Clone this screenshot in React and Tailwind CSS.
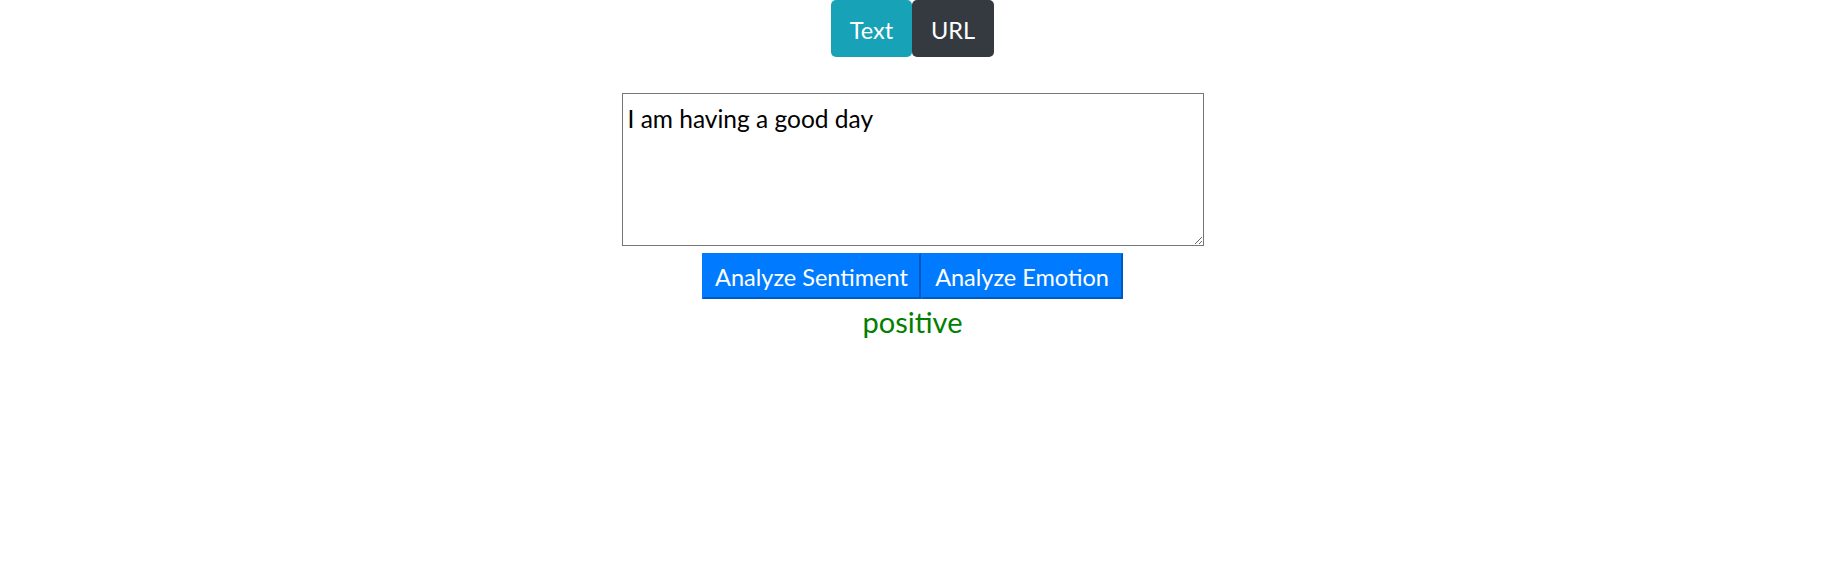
import { useState } from 'react'

const App = () => {
  const [mode, setMode] = useState('text')
  const [input, setInput] = useState('I am having a good day')

  return (
    <div className="min-h-[565px] w-full bg-white font-['Lato','Liberation_Sans',sans-serif]">
      <div className="w-[1825px] flex flex-col items-center">
        {/* Mode toggle */}
        <div className="flex">
          <button
            onClick={() => setMode('text')}
            className="h-[57px] w-[81px] rounded-[5px] bg-[#17a2b8] pt-[4px] text-[23.5px] text-white"
          >
            Text
          </button>
          <button
            onClick={() => setMode('url')}
            className="h-[57px] w-[82px] rounded-[5px] bg-[#343a40] pt-[4px] text-[23.5px] text-white"
          >
            URL
          </button>
        </div>

        {/* Input */}
        <textarea
          value={input}
          onChange={(e) => setInput(e.target.value)}
          className="mt-[36px] h-[153px] w-[582px] border border-[#767676] pl-[5px] pr-[5px] pt-[9px] pb-[2px] text-[24.5px] leading-[31px] text-black outline-none"
        />

        {/* Actions */}
        <div className="mt-[7px] flex">
          <button className="h-[46px] w-[219px] border-2 border-[#007bff] border-r-[#0059c1] border-b-[#0059c1] bg-[#007bff] pt-[3px] text-[23.5px] text-white">
            Analyze Sentiment
          </button>
          <button className="h-[46px] w-[202px] border-2 border-[#007bff] border-r-[#0059c1] border-b-[#0059c1] bg-[#007bff] pt-[3px] text-[23.5px] text-white">
            Analyze Emotion
          </button>
        </div>

        {/* Result */}
        <div className="mt-[4px] text-[29px] leading-[38px] text-[#008000]">
          {mode === 'text' ? 'positive' : ''}
        </div>
      </div>
    </div>
  )
}

export default App
